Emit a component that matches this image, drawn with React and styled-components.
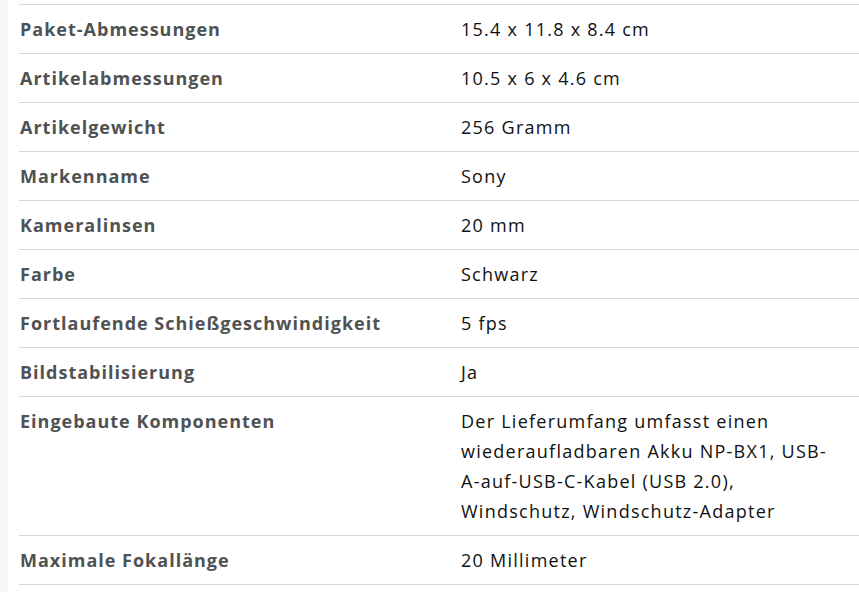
import React from 'react'
import styled, { createGlobalStyle } from 'styled-components'

const Global = createGlobalStyle`
  html, body {
    margin: 0;
    padding: 0;
    background: #ffffff;
  }
  body {
    font-family: "Open Sans", "Noto Sans", sans-serif;
  }
`

const Page = styled.div`
  display: flex;
  width: 859px;
  height: 592px;
  overflow: hidden;
  background: #ffffff;
`

const Edge = styled.div`
  width: 8px;
  flex-shrink: 0;
  background: #f7f7f7;
`

const Table = styled.div`
  margin: 4px 0 0 11px;
  flex: 1;
  border-top: 1px solid #d5d9d9;
`

const Row = styled.div`
  display: grid;
  grid-template-columns: 442px 1fr;
  border-bottom: 1px solid #d5d9d9;
  padding: 9px 0;
  font-size: 18px;
  line-height: 30px;
`

const Label = styled.div`
  font-weight: 700;
  color: #4f5252;
  padding-left: 1px;
  letter-spacing: 1px;
`

const Value = styled.div`
  color: #0f1111;
  padding-right: 28px;
  letter-spacing: 1.25px;
`

const NoBreak = styled.span`
  white-space: nowrap;
`

const specs = [
  ['Paket-Abmessungen', '15.4 x 11.8 x 8.4 cm'],
  ['Artikelabmessungen', '10.5 x 6 x 4.6 cm'],
  ['Artikelgewicht', '256 Gramm'],
  ['Markenname', 'Sony'],
  ['Kameralinsen', '20 mm'],
  ['Farbe', 'Schwarz'],
  ['Fortlaufende Schießgeschwindigkeit', '5 fps'],
  ['Bildstabilisierung', 'Ja'],
  [
    'Eingebaute Komponenten',
    <>
      Der Lieferumfang umfasst einen wiederaufladbaren Akku NP-BX1, USB-
      <NoBreak>A-auf-USB-C-Kabel</NoBreak> (USB 2.0), Windschutz, Windschutz-Adapter
    </>,
  ],
  ['Maximale Fokallänge', '20 Millimeter'],
]

export default function App() {
  return (
    <Page>
      <Global />
      <Edge />
      <Table>
        {specs.map(([k, v]) => (
          <Row key={k}>
            <Label>{k}</Label>
            <Value>{v}</Value>
          </Row>
        ))}
      </Table>
    </Page>
  )
}
